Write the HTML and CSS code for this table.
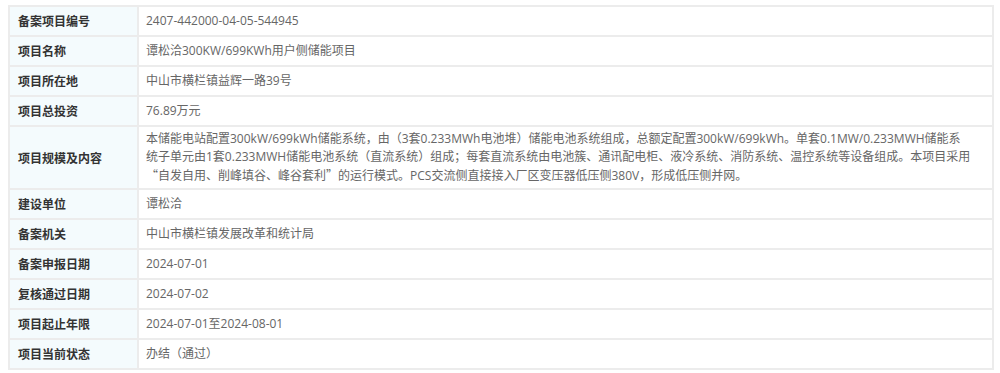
FILE: index.html
```html
<!DOCTYPE html>
<html lang="zh-CN">
<head>
<meta charset="utf-8">
<title>备案项目信息</title>
<link rel="stylesheet" href="styles.css">
</head>
<body>
<table class="info">
  <tbody>
    <tr><th>备案项目编号</th><td>2407-442000-04-05-544945</td></tr>
    <tr><th>项目名称</th><td>谭松洽300KW/699KWh用户侧储能项目</td></tr>
    <tr><th>项目所在地</th><td>中山市横栏镇益辉一路39号</td></tr>
    <tr><th>项目总投资</th><td>76.89万元</td></tr>
    <tr><th>项目规模及内容</th><td class="multi">本储能电站配置300kW/699kWh储能系统，由（3套0.233MWh电池堆）储能电池系统组成，总额定配置300kW/699kWh。单套0.1MW/0.233MWH储能系统子单元由1套0.233MWH储能电池系统（直流系统）组成；每套直流系统由电池簇、通讯配电柜、液冷系统、消防系统、温控系统等设备组成。本项目采用<span class="cjk">“</span>自发自用、削峰填谷、峰谷套利<span class="cjk">”</span>的运行模式。PCS交流侧直接接入厂区变压器低压侧380V，形成低压侧并网。</td></tr>
    <tr><th>建设单位</th><td>谭松洽</td></tr>
    <tr><th>备案机关</th><td>中山市横栏镇发展改革和统计局</td></tr>
    <tr><th>备案申报日期</th><td>2024-07-01</td></tr>
    <tr><th>复核通过日期</th><td>2024-07-02</td></tr>
    <tr><th>项目起止年限</th><td>2024-07-01至2024-08-01</td></tr>
    <tr><th>项目当前状态</th><td>办结（通过）</td></tr>
  </tbody>
</table>
</body>
</html>
```

FILE: styles.css
```css
html, body {
  background: #ffffff;
}
body {
  margin: 5px 6px 0 8px;
  font-family: "Open Sans", "Noto Sans CJK SC", sans-serif;
  font-size: 12px;
}
.info {
  width: 986px;
  border-collapse: collapse;
  border: 2px solid #ececec;
}
.info th,
.info td {
  border: 2px solid #ececec;
  padding: 5px 8px 5px 7px;
  line-height: 18px;
  height: 18px;
  vertical-align: middle;
  text-align: left;
}
.info th {
  width: 111px;
  padding-left: 8px;
  background: #f4fbfd;
  color: #333333;
  font-weight: bold;
  font-family: "Noto Sans CJK SC", sans-serif;
}
.info td {
  color: #666666;
}
.info td.multi {
  padding-top: 3px;
  padding-bottom: 3px;
  padding-right: 20px;
}
.cjk {
  font-family: "Noto Sans CJK SC", sans-serif;
}
```
